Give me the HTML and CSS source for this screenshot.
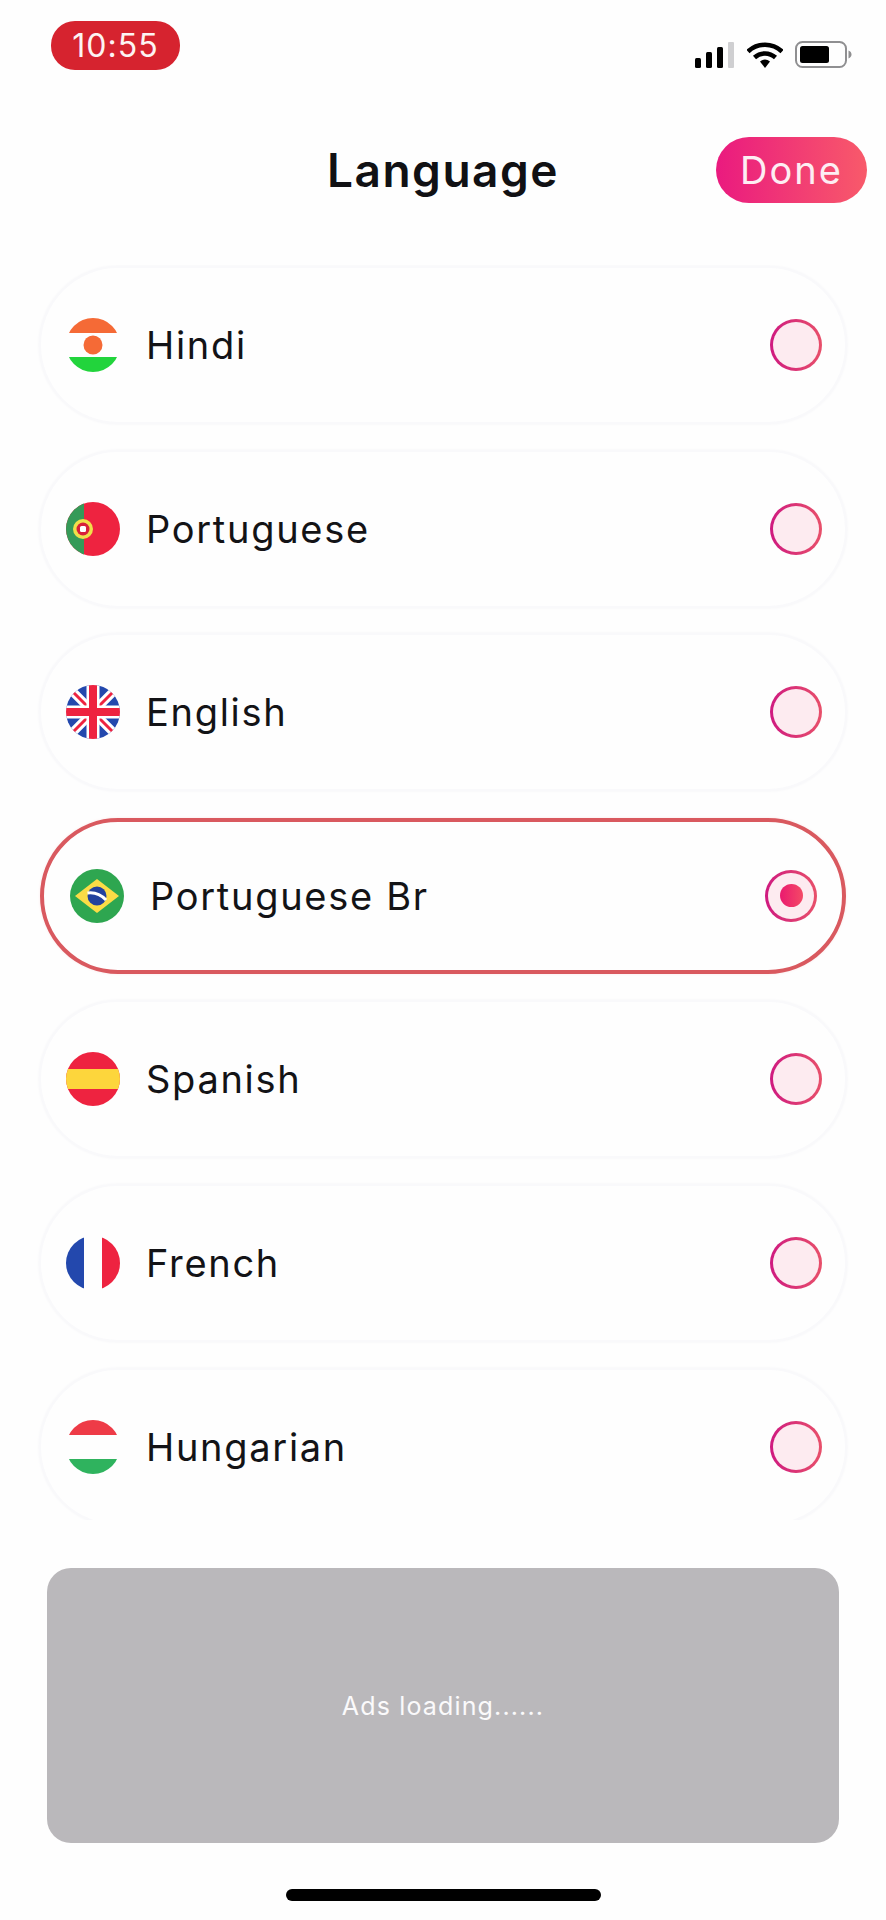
FILE: index.html
```html
<!DOCTYPE html>
<html lang="en">
<head>
<meta charset="utf-8">
<title>Language</title>
<link rel="stylesheet" href="styles.css">
</head>
<body>
<svg class="defs" width="0" height="0" aria-hidden="true">
  <defs>
    <clipPath id="disc"><circle cx="27" cy="27" r="27"/></clipPath>
  </defs>
</svg>
<main class="screen">
  <div class="status">
    <span class="time">10:55</span>
    <div class="status-icons">
      <svg class="signal" viewBox="0 0 40 26" width="40" height="26">
        <rect x="0" y="16" width="6" height="10" rx="1.5" fill="#000"/>
        <rect x="11" y="10" width="6" height="16" rx="1.5" fill="#000"/>
        <rect x="22" y="5" width="6" height="21" rx="1.5" fill="#000"/>
        <rect x="33" y="0" width="6" height="26" rx="1" fill="#cfcfd1"/>
      </svg>
      <svg class="wifi" viewBox="0 0 36 26" width="36" height="26">
        <path d="M1 9.5C10.5 .5 25.5 .5 35 9.5" fill="none" stroke="#000" stroke-width="4.5"/>
        <path d="M7.5 15.5C13.5 10 22.5 10 28.5 15.5" fill="none" stroke="#000" stroke-width="4.5"/>
        <path d="M13 19.5Q18 15.5 23 19.5L18 26Z" fill="#000"/>
      </svg>
      <svg class="battery" viewBox="0 0 57 27" width="57" height="27">
        <rect x="1" y="1" width="50" height="25" rx="6.5" fill="none" stroke="#8f8f91" stroke-width="2"/>
        <rect x="5" y="5" width="29" height="17" rx="2.5" fill="#000"/>
        <path d="M53.5 9.500c2 .8 3 2.200 3 4s-1 3.200-3 4z" fill="#8f8f91"/>
      </svg>
    </div>
  </div>

  <header class="topbar">
    <span></span>
    <h1 class="title">Language</h1>
    <button class="done">Done</button>
  </header>

  <ul class="list">
    <li class="row">
      <svg class="flag" viewBox="0 0 54 54"><g clip-path="url(#disc)"><rect width="54" height="15" fill="#f56a36"/><rect y="15" width="54" height="24" fill="#fefefe"/><rect y="39" width="54" height="15" fill="#22d43c"/><circle cx="27" cy="27" r="9.5" fill="#f56a36"/></g></svg>
      <span class="name">Hindi</span>
      <span class="radio"></span>
    </li>
    <li class="row">
      <svg class="flag" viewBox="0 0 54 54"><g clip-path="url(#disc)"><rect width="54" height="54" fill="#ee2340"/><rect width="18" height="54" fill="#359a58"/><circle cx="17" cy="27" r="10" fill="#f0e04a"/><circle cx="17" cy="27" r="6.5" fill="#d8203a"/><rect x="14" y="24" width="6" height="6" rx="1.5" fill="#fff"/></g></svg>
      <span class="name">Portuguese</span>
      <span class="radio"></span>
    </li>
    <li class="row">
      <svg class="flag" viewBox="0 0 54 54"><g clip-path="url(#disc)"><rect width="54" height="54" fill="#2348ad"/><path d="M0 0 54 54M54 0 0 54" stroke="#fff" stroke-width="9"/><path d="M4 4 22 22M50 4 32 22M4 50 22 32M50 50 32 32" stroke="#ee2340" stroke-width="3"/><path d="M27 0V54M0 27H54" stroke="#fff" stroke-width="13"/><path d="M27 0V54M0 27H54" stroke="#ee2340" stroke-width="8"/></g></svg>
      <span class="name">English</span>
      <span class="radio"></span>
    </li>
    <li class="row is-selected">
      <svg class="flag" viewBox="0 0 54 54"><g clip-path="url(#disc)"><rect width="54" height="54" fill="#2ea650"/><path d="M5 27 27 10 49 27 27 44Z" fill="#fbdc46"/><circle cx="27" cy="27" r="9.5" fill="#23429d"/><path d="M17.5 24Q28 22.5 36 31" fill="none" stroke="#fff" stroke-width="3"/></g></svg>
      <span class="name">Portuguese Br</span>
      <span class="radio is-on"><i class="dot"></i></span>
    </li>
    <li class="row">
      <svg class="flag" viewBox="0 0 54 54"><g clip-path="url(#disc)"><rect width="54" height="54" fill="#ee2340"/><rect y="17" width="54" height="20" fill="#fdd63c"/></g></svg>
      <span class="name">Spanish</span>
      <span class="radio"></span>
    </li>
    <li class="row">
      <svg class="flag" viewBox="0 0 54 54"><g clip-path="url(#disc)"><rect width="18" height="54" fill="#2348ad"/><rect x="18" width="18" height="54" fill="#fefefe"/><rect x="36" width="18" height="54" fill="#ee2340"/></g></svg>
      <span class="name">French</span>
      <span class="radio"></span>
    </li>
    <li class="row">
      <svg class="flag" viewBox="0 0 54 54"><g clip-path="url(#disc)"><rect width="54" height="15" fill="#ee3b47"/><rect y="15" width="54" height="24" fill="#fefefe"/><rect y="39" width="54" height="15" fill="#2fb35e"/></g></svg>
      <span class="name">Hungarian</span>
      <span class="radio"></span>
    </li>
  </ul>

  <section class="ad"><span>Ads loading......</span></section>
  <div class="home"></div>
</main>
</body>
</html>
```
FILE: styles.css
```css
* { box-sizing: border-box; }

html, body {
  margin: 0;
  padding: 0;
  background: #fefefe;
}

.defs { position: absolute; }

.screen {
  width: 886px;
  height: 1920px;
  display: flex;
  flex-direction: column;
  overflow: hidden;
  font-family: Inter, "Liberation Sans", sans-serif;
  color: #131316;
}

.status {
  display: flex;
  justify-content: space-between;
  align-items: flex-start;
  padding: 21px 34px 0 51px;
  height: 70px;
}

.time {
  width: 129px;
  height: 49px;
  border-radius: 24px;
  background: #d6232f;
  color: #fdf3f3;
  font-size: 32px;
  letter-spacing: 1px;
  line-height: 49px;
  text-align: center;
}

.status-icons {
  display: flex;
  align-items: flex-start;
  gap: 12px;
  margin-top: 20px;
}

.signal, .wifi { margin-top: 1px; }

.topbar {
  display: grid;
  grid-template-columns: 1fr auto 1fr;
  align-items: center;
  height: 66px;
  margin-top: 67px;
  padding-right: 19px;
  padding-left: 19px;
}

.title {
  margin: 0;
  font-size: 46px;
  font-weight: 600;
  line-height: 66px;
  letter-spacing: 1.5px;
  color: #111114;
}

.done {
  justify-self: end;
  width: 151px;
  height: 66px;
  padding: 0;
  border: 0;
  border-radius: 33px;
  background: linear-gradient(90deg, #ea1a7f, #f85a6a);
  color: #fdeef3;
  font: 400 38px/66px Inter, "Liberation Sans", sans-serif;
  letter-spacing: 2px;
}

.list {
  list-style: none;
  height: 1255px;
  margin: 62px 0 0;
  padding: 1px 39px 0;
  overflow: hidden;
  display: flex;
  flex-direction: column;
  gap: 25.6px;
  flex: none;
}

.row {
  flex: none;
  height: 158px;
  display: flex;
  align-items: center;
  padding: 0 25px 0 27px;
  border-radius: 79px;
  border: 2px solid #f9f9fb;
  box-shadow: 0 0 3px #f4f4f7;
  background: #fefefe;
}

.row.is-selected {
  height: 156px;
  margin: 1px;
  padding: 0 29px 0 30px;
  border: 4px solid #d9595f;
  box-shadow: 0 0 3px #fbe9ea;
}

.flag {
  flex: none;
  width: 54px;
  height: 54px;
  margin-left: -2px;
}

.is-selected .flag { margin-left: -4px; }

.name {
  flex: 1;
  margin-left: 26px;
  font-size: 38px;
  letter-spacing: 1.7px;
  line-height: 44px;
}

.radio {
  flex: none;
  width: 52px;
  height: 52px;
  margin-right: -2px;
  border-radius: 50%;
  border: 3px solid transparent;
  background:
    linear-gradient(#fdebf0, #fdebf0) padding-box,
    linear-gradient(90deg, #cf1a80, #e8506a) border-box;
  display: flex;
  align-items: center;
  justify-content: center;
}

.is-selected .radio { margin-right: -4px; }

.dot {
  width: 23px;
  height: 23px;
  border-radius: 50%;
  background: linear-gradient(90deg, #ea1a6f, #f44a66);
}

.ad {
  flex: none;
  height: 275px;
  margin: 48px 47px 0;
  border-radius: 24px;
  background: #bab8bb;
  display: flex;
  align-items: center;
  justify-content: center;
  color: #fbfafb;
  font-size: 25px;
  letter-spacing: 1.15px;
}

.home {
  flex: none;
  width: 315px;
  height: 12px;
  margin: 46px auto 0;
  border-radius: 6px;
  background: #000;
}
```
